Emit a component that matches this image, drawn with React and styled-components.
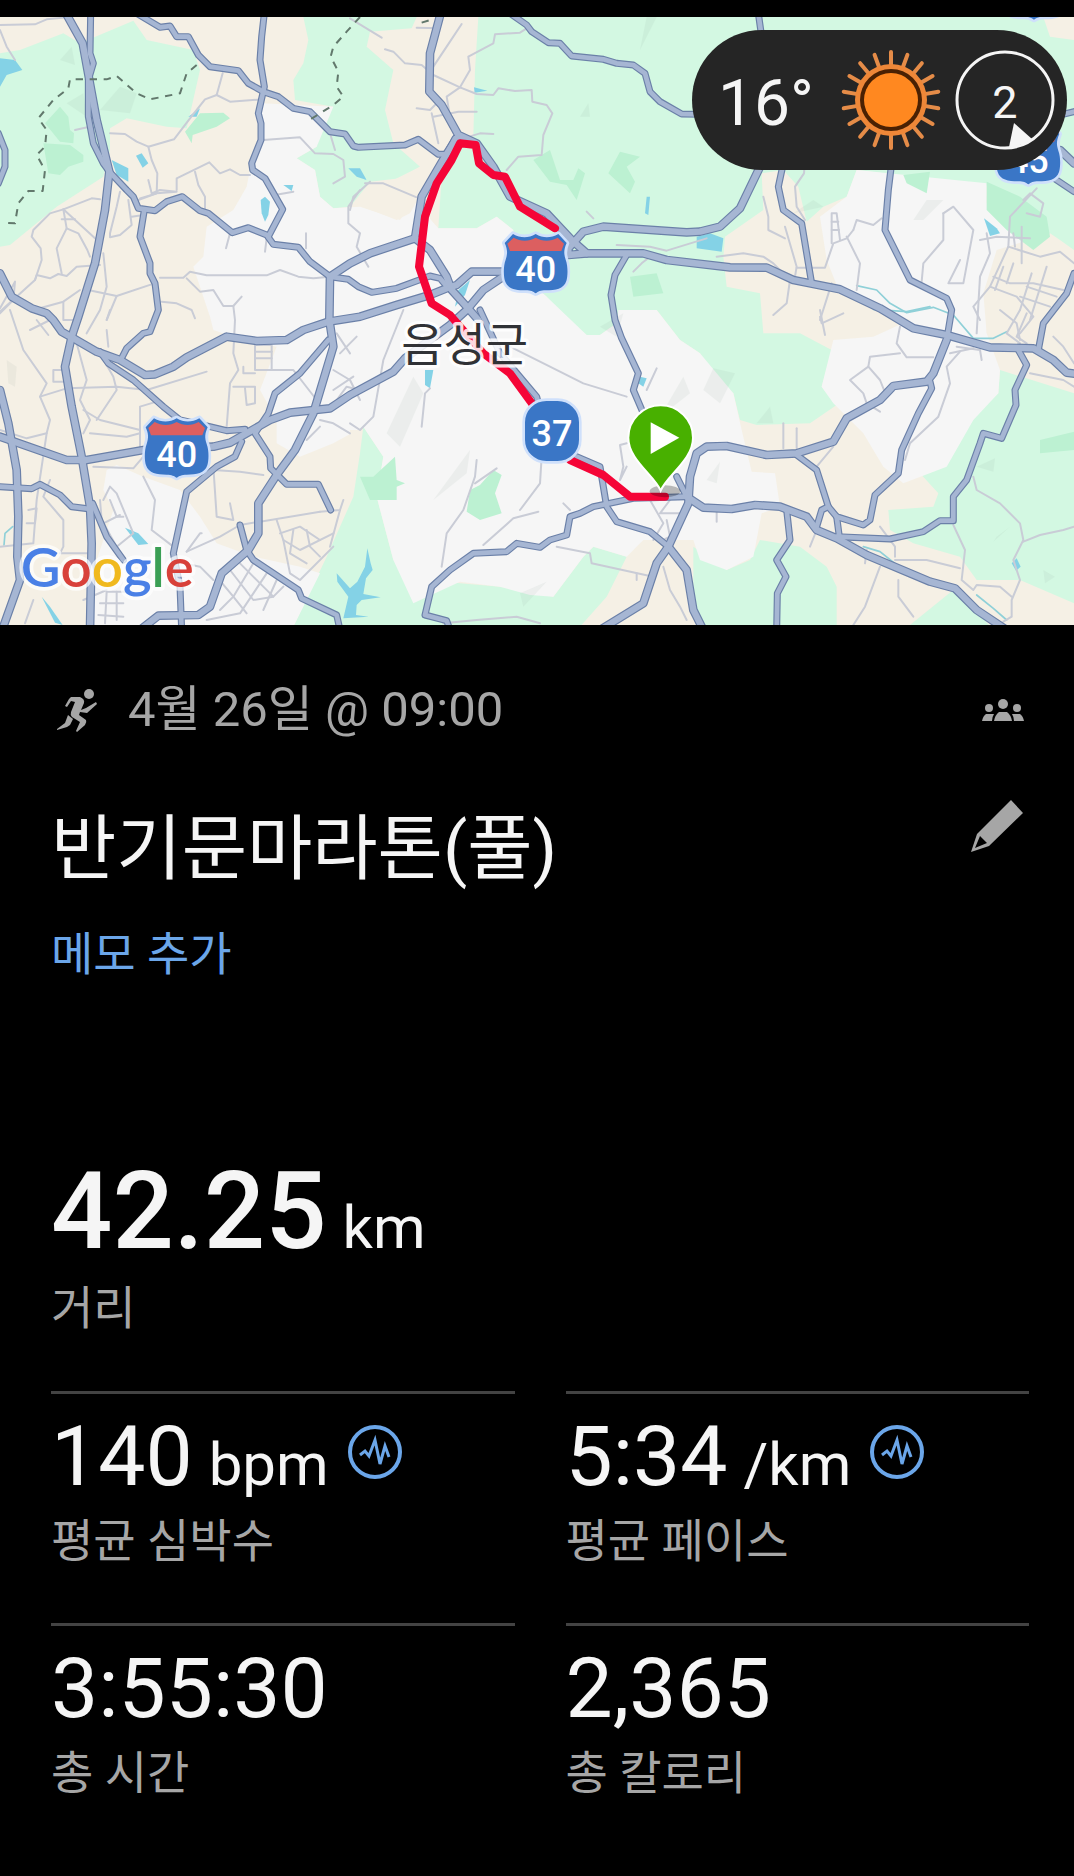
import React from "react";
import styled, { createGlobalStyle } from "styled-components";

const GlobalStyle = createGlobalStyle`
  * {
    box-sizing: border-box;
  }
  body {
    margin: 0;
    background-color: #000;
    font-family: Roboto, "Noto Sans CJK KR", sans-serif;
  }
`;

const StyledPage = styled.main`
  min-height: 100vh;
  padding-top: 17px;
  background-color: #000;
  color: #f5f5f5;
`;

const StyledMapWrapper = styled.section`
  position: relative;
`;

const StyledMap = styled.svg`
  display: block;
  width: 100%;
  height: auto;
`;

const StyledWeather = styled.div`
  position: absolute;
  top: 13px;
  right: 7px;
  width: 375px;
  height: 140px;
  padding: 0 12px 0 26px;
  border-radius: 70px;
  background-color: #252525;
  display: flex;
  align-items: center;
  justify-content: space-between;
`;

const StyledTemperature = styled.span`
  padding-top: 8px;
  font-size: 64px;
  line-height: 72px;
`;

const StyledWeatherIcons = styled.div`
  display: flex;
  gap: 14px;
`;

const StyledDetails = styled.section`
  padding: 49px 45px 0 51px;
`;

const StyledRow = styled.div`
  display: flex;
  align-items: center;
  justify-content: space-between;
`;

const StyledDate = styled.div`
  display: flex;
  align-items: center;
  gap: 29px;
  color: #a6a6a6;
  font-size: 49px;
  line-height: 72px;
`;

const StyledGroup = styled.span`
  display: flex;
  margin-right: 5px;
`;

const StyledHeading = styled(StyledRow)`
  margin-top: 51px;
  align-items: flex-start;
`;

const StyledTitle = styled.h1`
  margin: 0;
  font-size: 71px;
  font-weight: 400;
  line-height: 104px;
`;

const IconButton = styled.button`
  display: flex;
  padding: 0;
  border: 0;
  background: none;
  color: ${(props) => props.$color || "#a6a6a6"};
  &:hover {
    cursor: pointer;
  }
`;

const EditButton = styled(IconButton)`
  margin: 3px 6px 0 0;
`;

const MemoButton = styled.button`
  display: block;
  margin: 19px 0 0;
  padding: 0;
  border: 0;
  background: none;
  color: #6ba6e9;
  font-family: inherit;
  font-size: 46px;
  line-height: 68px;
  &:hover {
    cursor: pointer;
  }
`;

const StyledDistance = styled.div`
  height: 243px;
  margin-top: 160px;
`;

const StyledStats = styled.div`
  display: grid;
  grid-template-columns: 1fr 1fr;
  column-gap: 51px;
`;

const StyledStat = styled.div`
  height: 232px;
  padding-top: 13px;
  border-top: 3px solid #434343;
`;

const StyledValue = styled.div`
  display: flex;
  align-items: baseline;
  gap: 16px;
  font-size: ${(props) => (props.$large ? "108px" : "84px")};
  font-weight: ${(props) => (props.$large ? 500 : 400)};
  line-height: ${(props) => (props.$large ? "126px" : "100px")};
`;

const StyledUnit = styled.span`
  font-size: 60px;
  font-weight: 400;
  line-height: 60px;
`;

const InsightButton = styled(IconButton)`
  align-self: flex-start;
  margin: 18px 0 0 3px;
`;

const StyledLabel = styled.div`
  color: #a6a6a6;
  font-size: 46px;
  line-height: 68px;
`;

// map geometry, three units to the pixel
const greens = [
  "0,160 60,150 190,100 240,130 400,62 440,120 580,150 600,210 575,320 560,385 500,380 380,355 330,385 330,450 310,530 170,620 30,735 0,740",
  "910,51 1250,51 1235,85 1110,95 1100,140 1180,210 1155,330 1180,430 1260,500 1200,535 1110,545 1050,620 1000,625 960,590 945,510 890,475 950,440 960,370 1000,320 885,300 880,240 910,190 925,120",
  "1435,51 3222,51 3222,750 3180,720 3150,700 3050,740 2990,560 2570,510 2540,590 2470,620 2420,665 2395,560 2350,510 2285,520 2290,630 2175,710 2170,770 2180,860 2280,880 2290,1000 2400,1000 2495,1050 2465,1160 2510,1215 2430,1270 2270,1275 2220,1260 2200,1180 2130,1130 2100,1060 2040,1020 1970,930 1855,930 1850,970 1800,1005 1760,1005 1690,950 1640,890 1540,800 1540,690 1490,650 1430,685 1315,685 1325,530 1380,450 1420,410 1425,210",
  "3000,1110 3222,1180 3222,1810 3060,1740 2930,1740 2880,1670 2740,1630 2670,1590 2665,1530 2800,1520 2815,1480 2760,1420 2830,1400 2930,1240 2995,1180",
  "2080,1640 2180,1710 2250,1680 2280,1620 2400,1640 2480,1700 2510,1760 2510,1880 2110,1880 2080,1800",
  "2730,1875 2860,1770 2890,1780 2970,1880",
  "1090,1280 1150,1370 1130,1490 1180,1680 1240,1730 1380,1750 1500,1760 1660,1790 1750,1670 1780,1640 1880,1670 1820,1790 1740,1880 880,1880 980,1670 1060,1490 1080,1360",
];

const whites = [
  "785,310 1000,320 950,440 890,475 945,510 960,590 1000,625 1080,620 1200,660 1240,600 1315,685 1430,685 1490,650 1540,690 1540,800 1640,890 1760,1005 1800,1005 1850,970 1855,930 1970,930 2040,1020 2100,1060 2200,1180 2225,1290 2255,1415 2325,1420 2340,1520 2285,1540 2260,1670 2180,1710 2100,1680 2080,1620 1930,1620 1880,1670 1780,1640 1750,1670 1660,1790 1590,1785 1500,1760 1380,1745 1240,1810 1180,1680 1130,1490 1150,1370 1090,1280 1000,1330 900,1370 830,1330 830,1260 780,1170 830,1040 700,1010 640,990 630,950 580,800 610,770 620,680 700,630 740,560 750,510 785,400",
  "2570,510 2960,550 2960,610 3030,660 3090,700 3060,760 2990,770 2960,880 2960,1000 3000,1110 2995,1180 2920,1260 2840,1400 2710,1450 2650,1400 2590,1300 2500,1210 2465,1160 2500,1020 2620,1010 2730,960 2520,880 2480,780 2460,650 2540,590",
  "320,1410 350,1395 430,1430 540,1470 600,1550 650,1630 760,1670 900,1700 960,1720 880,1880 270,1880 280,1710 340,1530 310,1470",
];

const creams = [
  "2990,750 3120,710 3222,760 3222,980 3080,1010 2960,1000 2950,880",
  "3130,51 3222,51 3222,120 3150,110",
  "1050,1290 1080,1290 1060,1420 1050,1470",
  "1170,545 1260,500 1275,560 1230,640 1190,660 1100,625 1060,610",
];

const woods = [
  "180,320 205,350 210,390 222,400 220,430 180,425 135,370",
  "130,430 210,435 250,465 250,485 205,500 180,525 145,520",
  "600,340 670,338 690,355 650,380 578,405 575,430 555,395",
  "1600,480 1650,450 1680,540 1720,540 1735,505 1755,520 1730,600 1700,555 1650,545",
  "1825,520 1860,455 1920,470 1880,500 1905,545 1890,580",
  "1890,830 1970,820 1990,880 1900,890",
  "1410,1470 1440,1455 1480,1410 1505,1425 1485,1480 1505,1540 1440,1560 1400,1535",
  "1080,1430 1120,1430 1185,1370 1190,1440 1215,1450 1190,1460 1190,1500 1110,1500",
  "2710,525 2790,515 2780,580 2720,550",
  "2960,545 3060,590 3140,650 3150,710 3100,750 3020,690 2960,630",
  "3120,1320 3222,1295 3222,1350 3120,1360",
];

const shades = [
  "180,180 215,140 225,195",
  "300,330 360,260 410,280 390,340",
  "200,310 250,280 260,350",
  "1740,350 1765,310 1770,350",
  "1920,150 1940,51 1970,51",
  "2380,640 2440,600 2470,620",
  "2740,660 2780,600 2830,600 2770,660",
  "1160,1300 1240,1130 1270,1180 1200,1340",
  "1300,1500 1410,1350 1400,1420",
  "1560,1780 1640,1745 1570,1820",
  "2270,1270 2310,1220 2320,1270",
  "2110,1170 2140,1105 2205,1120 2160,1210",
  "2120,1440 2160,1385 2150,1450",
  "2930,1400 2985,1375 2980,1415",
  "2980,1625 3030,1580 2990,1610",
  "3130,1710 3165,1730 3135,1750",
  "20,1080 50,1100 45,1160 25,1150",
  "1800,980 1870,940 1850,1010",
  "1980,1250 2050,1130 2070,1180",
];

const waters = [
  "0,175 45,180 67,210 20,225 0,260",
  "335,480 385,505 385,545 350,525",
  "408,467 425,460 445,490 428,503",
  "782,600 795,590 810,605 805,645 795,665 785,640",
  "850,555 880,555 875,573",
  "1045,505 1080,505 1100,540 1070,530",
  "2090,710 2130,700 2170,715 2165,755 2090,745",
  "1375,870 1410,840 1395,885 1365,920",
  "1275,1110 1300,1110 1290,1165 1275,1155",
  "1920,1130 1940,1135 1930,1160 1915,1150",
  "375,1583 415,1600 445,1632 415,1635",
  "125,1790 150,1820 188,1875 165,1868",
  "1010,1720 1050,1765 1072,1745 1095,1700 1102,1645 1112,1690 1118,1710 1098,1735 1090,1782 1142,1792 1085,1800 1070,1815 1068,1845 1106,1850 1030,1855 1045,1790 1012,1745",
  "2952,655 2990,685 3000,700 2970,708",
  "3035,1690 3050,1675 3062,1700 3048,1712",
  "1940,590 1950,590 1945,645 1935,640",
  "1422,262 1462,272 1424,278",
  "565,350 600,325 590,350",
];

const streams = [
  "2570,857 2630,870 2670,910 2720,938 2800,922 2860,945 2920,1015 2980,1015 3020,995",
  "2590,1640 2640,1655 2690,1695",
  "2930,1785 2980,1825 3020,1860",
  "38,1580 15,1600 12,1635",
  "2620,928 2720,935 2790,920",
];

const minorRoads = [
  "0,75 105,73 140,58 200,52",
  "0,90 20,140 45,180",
  "330,400 375,402 410,425 445,440 522,418 570,355 615,298 650,285 668,220",
  "650,285 690,305 790,298",
  "445,440 455,480 472,520 470,580 420,595",
  "530,570 530,535 628,487 660,520 690,508 720,525 750,525",
  "585,515 595,555 615,590 615,625",
  "415,600 470,580 530,575 480,570 455,580 445,540",
  "225,390 262,382",
  "0,935 105,840 110,825 150,835 175,822 200,828 230,800 300,795",
  "105,840 125,780 122,745 95,710 100,690 150,640 190,628 275,595 300,598",
  "190,628 200,685 170,745 185,820",
  "200,685 235,700 262,750 270,770",
  "190,628 285,715",
  "185,658 225,658",
  "360,575 350,620 330,700 330,712 360,705 395,675 385,600",
  "395,650 430,645",
  "310,760 320,860 300,930 260,1000",
  "275,872 350,888 470,848",
  "350,888 320,960",
  "480,833 550,833 570,815 620,826 800,826 840,810 895,830 940,835 990,830",
  "560,835 600,875 640,870 670,918 700,918 725,890",
  "700,918 705,960 700,1060 715,1110 690,1150 680,1280",
  "485,905 530,910 575,930 585,955",
  "790,420 900,412 945,460 1000,462 1030,480 1035,530 1000,550",
  "690,700 678,745",
  "800,715 795,755",
  "918,700 918,745",
  "825,585 880,575",
  "1080,570 1045,620 1045,670 1080,700 1070,740 1105,800",
  "990,400 1005,450",
  "0,925 45,845 40,900 0,940",
  "100,930 190,905 240,870",
  "190,905 190,960 235,960",
  "1155,148 1180,155 1215,190 1265,195 1300,225 1380,262 1430,282 1480,285 1495,265 1545,273 1595,270 1597,305 1640,315 1657,340 1630,405 1625,465 1555,470 1520,510",
  "1380,262 1410,210 1405,170 1480,130 1485,103 1560,98 1580,85",
  "1050,55 1145,113",
  "1385,72 1340,140 1300,200",
  "1250,83 1320,85",
  "1380,262 1340,290 1350,350 1350,380",
  "1250,325 1290,330 1320,300",
  "1295,340 1315,430",
  "1300,350 1375,335 1430,335",
  "1390,415 1440,400 1480,402",
  "1095,550 1150,550 1250,592",
  "1110,545 1060,590 1050,630",
  "1900,815 1925,790 1950,770",
  "1760,635 1780,655",
  "2417,450 2412,520 2385,560 2390,620 2415,660",
  "1850,735 1950,740 2000,752 2120,715",
  "2290,590 2305,650 2305,690 2355,715",
  "2355,680 2390,800 2385,830",
  "2150,770 2230,760 2290,770 2320,790 2370,840 2360,910 2320,945",
  "2390,803 2475,803 2500,730 2540,715 2560,690",
  "2495,730 2495,640 2510,640 2520,720",
  "2495,665 2515,665",
  "2495,690 2517,690",
  "2560,690 2570,660 2620,675 2645,655",
  "2540,710 2580,790 2570,870",
  "2830,640 2860,620 2920,690 2890,850 2845,850 2880,780",
  "2830,640 2830,720 2770,790 2765,845",
  "2495,850 2460,960",
  "3110,565 3030,650 3025,740 2970,860 2920,920 2940,960",
  "3070,600 3090,580 3130,610 3120,650 3080,640",
  "3025,740 3120,770 3180,755 3222,790",
  "2940,720 2990,710 3090,715",
  "3040,700 3045,740",
  "3065,680 3065,790",
  "2970,860 3050,890 3100,950 3060,1000",
  "3040,790 3020,850",
  "3010,800 2985,870",
  "3080,860 3170,890",
  "3095,820 3060,930",
  "3140,800 3090,960",
  "3060,890 3150,920",
  "2980,830 3030,850 3100,850 3190,870",
  "2960,700 2970,760 2940,830 2930,1000",
  "30,930 70,1050 140,1150 120,1190 150,1260 140,1300 80,1315 0,1290",
  "120,1190 200,1165 350,1160 440,1170 620,1115",
  "160,1110 200,1110 200,1145 160,1145 160,1110",
  "250,1230 300,1260 420,1290",
  "230,1030 260,1140 240,1200 270,1260 250,1300",
  "140,1300 110,1500 100,1630 0,1640",
  "320,960 330,930",
  "320,990 325,1040",
  "90,990 150,960",
  "110,960 145,1005",
  "300,1060 340,1130 350,1170 290,1260",
  "420,1360 420,1220 470,1205",
  "270,1300 380,1310 420,1300",
  "280,1400 400,1405 430,1370",
  "430,1430 465,1500 455,1590 520,1640",
  "310,1500 330,1460 350,1480 400,1600 350,1640 305,1560 300,1500",
  "330,1500 350,1550 370,1550",
  "310,1570 360,1545",
  "150,1440 130,1490 190,1560 190,1640 180,1660 260,1660",
  "85,1530 110,1525 105,1570 80,1570",
  "560,1655 660,1610 720,1575 960,1535",
  "560,1655 600,1600 605,1600",
  "640,1400 650,1550 700,1560 690,1510",
  "640,1410 720,1415 790,1425",
  "765,1035 815,1035 815,1110 765,1110 765,1035",
  "765,1055 815,1055",
  "765,1075 815,1075",
  "700,1160 765,1160 765,1210 740,1215 735,1165",
  "815,1110 880,1110 950,1200",
  "730,1100 730,1120 765,1120",
  "1010,1000 1050,1060",
  "1070,1010 1020,1060",
  "1000,1110 1050,1140 1080,1200",
  "1000,1170 1060,1130",
  "1010,1200 1040,1160 1080,1170",
  "960,1260 1000,1270 1050,1300",
  "920,1320 960,1280",
  "830,1560 850,1620 900,1650 1000,1600",
  "840,1600 900,1580 960,1620",
  "850,1620 870,1720 900,1740 1000,1640",
  "880,1590 870,1660 920,1690",
  "920,1590 930,1640 960,1670",
  "960,1535 1020,1530 1030,1500",
  "1020,1530 990,1640",
  "650,1730 700,1790 740,1840",
  "690,1710 760,1800 820,1790",
  "720,1690 820,1790 850,1760",
  "760,1690 700,1790 660,1830",
  "800,1720 720,1840 620,1860",
  "830,1740 790,1830",
  "550,1690 600,1700 640,1740",
  "320,1775 385,1775",
  "320,1775 315,1870",
  "350,1775 350,1860",
  "300,1810 370,1810",
  "295,1845 370,1850",
  "100,1800 75,1870",
  "250,1800 320,1770",
  "1210,930 1150,1080 1120,1250 1080,1290 1050,1270",
  "1290,1165 1275,1180 1265,1280",
  "1530,1040 1650,1100 1750,1150 1880,1190",
  "1970,1105 1940,1170",
  "1430,1380 1425,1430 1390,1530 1340,1600 1325,1700",
  "1425,1450 1490,1405",
  "1625,1370 1620,1450 1560,1530",
  "1615,1535 1540,1555 1450,1635",
  "1670,1640 1770,1660 1775,1690 1960,1730",
  "1690,1510 1710,1530",
  "1880,1330 1860,1335 1870,1400 1860,1440 1880,1400",
  "1950,1500 1990,1570 1960,1620",
  "2010,1500 1980,1540 2040,1540",
  "2000,1560 2010,1610 1990,1620",
  "1990,1700 2010,1770 2040,1820 2060,1860",
  "1330,1870 1430,1860 1550,1850 1620,1870",
  "1910,1720 1910,1740",
  "2350,1270 2350,1345",
  "2390,1285 2390,1345",
  "2500,1340 2450,1400",
  "2150,1530 2150,1565",
  "2460,950 2465,970 2530,940",
  "2460,930 2475,1005",
  "2700,980 2690,1030 2720,1072 2800,1072",
  "2700,1060 2610,1070 2605,1100 2640,1140 2660,1190",
  "2605,1100 2550,1140 2590,1180 2600,1210 2640,1235",
  "2880,1055 2840,1100 2850,1150 2815,1250 2730,1330 2715,1380",
  "2870,1040 2940,1050 2945,1080",
  "2850,1060 2920,1045",
  "3060,930 3020,1000 3060,1030",
  "3000,930 3050,970 3060,1020",
  "3080,940 3050,1010 3080,1030",
  "3090,1120 3190,1140 3222,1160",
  "3160,1010 3190,1040 3222,1090",
  "2920,1430 2930,1470 3000,1510 3060,1570 3070,1620 3040,1680 3060,1740 3035,1800 3035,1850 3010,1865",
  "3070,1625 3120,1605 3190,1590 3222,1580",
  "2860,1575 2895,1650 2885,1740 2920,1770 2930,1755 3000,1760 3035,1790",
  "2685,1680 2780,1680 2880,1705",
  "2600,1650 2595,1690",
  "2640,1700 2595,1820 2560,1875",
  "2695,1740 2695,1790 2740,1850",
  "2430,1640 2450,1590",
  "2640,1580 2685,1640 2685,1670",
];

const mainRoads = [
  "272,40 270,160 280,190 265,240 265,350 280,430 310,490 328,515",
  "410,40 480,82 510,78 530,110 565,110 595,165 630,200 715,212 745,250 790,275 835,290 880,325 930,335 990,395 1035,402 1060,438 1075,442 1215,435 1255,418 1315,463 1340,462 1365,415",
  "793,40 785,110 780,180 793,260 775,340 783,370 783,420 755,490 758,510 795,535 848,628 805,710",
  "328,515 380,570 400,590 415,625 465,632 500,605 547,590 600,632 625,640 697,698 745,683 800,705 820,733 895,742 930,785 990,830 1045,838 1075,860 1115,877 1190,865 1290,828 1320,835 1345,865",
  "433,630 420,710 450,790 450,820 465,850 475,930 450,995 430,1000 380,1045 362,1080",
  "300,1055 325,1090 400,1140 490,1220 540,1260 630,1280 680,1292 735,1288",
  "0,1460 95,1466 120,1453 180,1485 215,1520 270,1527",
  "278,1510 320,1610 370,1680",
  "725,1325 705,1370 650,1400 560,1475 520,1660 540,1760 545,1890",
  "985,1020 900,1120 825,1180 805,1240 765,1300 810,1370 812,1405 860,1453 955,1453 992,1530",
  "720,1575 740,1650 760,1680 895,1770 905,1795 1010,1845 1020,1890",
  "-5,400 15,450 15,500 -5,550",
  "1530,40 1580,75 1595,95 1645,128 1680,130 1715,168 1810,178 1850,190 1900,195 1935,220 1950,275 1980,305 2045,342 2100,343",
  "1880,765 1845,825 1833,885 1845,960 1865,1015 1915,1120 1900,1170 1930,1240",
  "2275,40 2285,110",
  "2350,490 2335,560 2350,630 2405,670 2435,850",
  "2675,490 2665,570 2655,690 2700,780 2730,840 2840,895 2855,930 2840,1020",
  "2790,1145 2795,1165 2755,1240 2705,1350 2695,1420 2625,1485 2610,1560 2590,1575 2510,1550 2485,1520 2450,1410 2390,1365",
  "3055,1050 3080,1095 3045,1170 3048,1215 3005,1315 2950,1300 2940,1330 2900,1440 2860,1490 2860,1562 2820,1562 2770,1595 2670,1617 2510,1610",
  "2360,1530 2370,1620 2330,1680 2358,1730 2332,1780 2330,1890",
  "2450,1580 2465,1530 2485,1520",
  "2510,1550 2518,1610",
  "3222,820 3200,880 3130,970 3115,1050",
  "3140,520 3222,575",
  "3160,350 3222,335",
  "1350,1890 1340,1862 1275,1845 1295,1760 1350,1710 1420,1660 1520,1655 1550,1630 1620,1642 1650,1620 1700,1605 1710,1550 1740,1540 1780,1520 1900,1495 2060,1490",
  "1440,930 1500,1060 1610,1190 1620,1230",
  "1730,1370 1800,1400 1820,1520 1850,1565 1950,1595 2005,1640",
  "2030,1430 2060,1490",
];

const highways = [
  "195,35 248,130 268,240 290,360 328,515 315,630 285,790 235,950 215,1010 195,1100 215,1220 245,1370 270,1520 275,1630 270,1890",
  "0,820 35,890 95,925 140,940 160,960 185,995 220,1015 290,1055 360,1080 435,1125 465,1123 520,1100 560,1072 680,1010 770,1023 860,1020 910,990 985,965 1080,950 1190,915 1290,885 1340,865 1370,855 1415,815 1510,815",
  "0,1310 200,1380 260,1380 430,1350 640,1340 690,1328 810,1260 870,1238 990,1225 1050,1185 1180,1115 1215,1075 1350,975 1400,930 1450,870 1510,830",
  "0,1170 25,1270 50,1410 55,1550 52,1670 60,1740 10,1880",
  "420,1890 475,1847 595,1845 630,1820 665,1720 745,1650 775,1600 775,1510 830,1425 885,1350 940,1240 1000,1040 988,960 990,830 1050,790 1110,760 1245,715",
  "1322,40 1290,160 1288,275 1325,315 1375,405 1430,430 1480,500 1530,590 1640,640 1715,720 1760,760 1930,760 2000,780 2190,802 2300,803 2380,840 2520,868 2640,925 2740,985 2840,1005 2970,1042 3100,1045 3160,1080 3200,1118 3230,1122",
  "1370,415 1335,470 1265,590 1245,715 1290,750 1340,830 1355,870 1400,920 1435,960",
  "1760,760 1705,765 1705,745 1750,695 1810,680 2060,697 2100,695 2160,680 2220,625 2290,480",
  "2840,1020 2800,1120 2780,1145 2680,1158 2640,1200 2540,1255 2500,1325 2390,1360 2300,1365 2180,1338 2120,1340 2090,1360 2070,1430 2065,1510 2005,1640 1970,1690 1930,1810 1800,1890",
  "2005,1640 2060,1710 2080,1830 2110,1890",
  "2060,1490 2110,1523 2195,1527 2265,1515 2340,1520 2420,1550 2450,1590 2510,1615 2600,1665 2790,1745 2865,1765 2930,1830 3020,1890",
  "3180,450 3222,490",
];

const borders = [
  "590,195 560,220 540,280 450,298 410,280 350,228 320,238 210,238 205,265 160,300 115,355 140,390 135,440 110,465 135,510 128,573 85,573 55,610 45,670 15,668",
  "1080,51 1040,95 1000,140 992,170 1015,215 1010,260 1030,290 1000,315 925,362",
  "1265,68 1290,60",
];

const routePoints =
  "1665,685 1560,620 1515,530 1480,525 1437,490 1427,435 1380,430 1355,480 1310,550 1275,650 1257,800 1295,910 1350,945 1450,1060 1530,1120 1610,1230 1710,1380 1810,1425 1890,1490 1995,1490";

const Areas = ({ items, fill, opacity }) => (
  <g fill={fill} opacity={opacity}>
    {items.map((points) => (
      <polygon key={points} points={points} />
    ))}
  </g>
);

const Lines = ({ items, stroke, width, dash }) => (
  <g
    fill="none"
    stroke={stroke}
    strokeWidth={width}
    strokeDasharray={dash}
    strokeLinejoin="round"
    strokeLinecap={dash ? "butt" : "round"}
  >
    {items.map((points) => (
      <polyline key={points} points={points} />
    ))}
  </g>
);

const shieldPath =
  "M-68,-89 C-45,-76 -22,-76 0,-89 C22,-76 45,-76 68,-89 L93,-62 C84,-42 84,-30 90,-12 C98,10 96,40 92,52 C84,76 60,80 30,80 C14,80 8,84 0,89 C-8,84 -14,80 -30,80 C-60,80 -84,76 -92,52 C-96,40 -98,10 -90,-12 C-84,-30 -84,-42 -93,-62 Z";

const Shield = ({ x, y, number }) => (
  <g transform={`translate(${x} ${y})`}>
    <path
      d={shieldPath}
      fill="#3a76c6"
      stroke="#cfe0fb"
      strokeWidth="16"
      strokeLinejoin="round"
    />
    <path d={shieldPath} fill="#3a76c6" />
    <path
      d="M-66,-78 C-45,-66 -20,-66 0,-78 C20,-66 45,-66 66,-78 L85,-60 L77,-38 L-77,-38 L-85,-60 Z"
      fill="#dc5f60"
    />
    <text
      y="56"
      textAnchor="middle"
      fontSize="108"
      fontWeight="500"
      fill="#fff"
    >
      {number}
    </text>
  </g>
);

const RouteMap = () => (
  <StyledMap viewBox="0 51 3222 1824" role="img" aria-label="음성군">
    <rect y="51" width="3222" height="1824" fill="#f5f0e5" />
    <Areas items={greens} fill="#d3f8e2" />
    <Areas items={whites} fill="#f6f6f6" />
    <Areas items={creams} fill="#f5f0e5" />
    <Areas items={woods} fill="#bcf1d2" />
    <Areas items={shades} fill="#8fa99b" opacity="0.1" />
    <Areas items={waters} fill="#84d2e6" />
    <Lines items={streams} stroke="#8fd0d8" width="5" />
    <Lines items={minorRoads} stroke="#c9ccd6" width="6" />
    <Lines items={mainRoads} stroke="#6b80a8" width="21" />
    <Lines items={highways} stroke="#6b80a8" width="26" />
    <Lines items={mainRoads} stroke="#a6b6d3" width="14" />
    <Lines items={highways} stroke="#a6b6d3" width="19" />
    <Lines items={borders} stroke="#62786c" width="6" dash="22 20" />
    <Lines items={[routePoints]} stroke="#f50537" width="24" />

    <g
      fontFamily='"Noto Sans CJK KR", sans-serif'
      fontSize="138"
      textAnchor="middle"
    >
      <text
        x="1394"
        y="1084"
        fill="#303236"
        stroke="#fff"
        strokeWidth="20"
        strokeOpacity="0.85"
        strokeLinejoin="round"
        paintOrder="stroke"
      >
        음성군
      </text>
    </g>

    <Shield x={530} y={1344} number="40" />
    <Shield x={1607} y={791} number="40" />
    <Shield x={3085} y={464} number="45" />
    <Shield x={3102} y={-30} number="" />

    <rect
      x="1571"
      y="1199"
      width="170"
      height="188"
      rx="68"
      fill="#3a76c6"
      stroke="#cfe0fb"
      strokeWidth="8"
    />
    <text
      x="1656"
      y="1339"
      textAnchor="middle"
      fontSize="108"
      fontWeight="500"
      fill="#fff"
    >
      37
    </text>

    <ellipse cx="1995" cy="1474" rx="46" ry="18" fill="#000" opacity="0.25" />
    <path
      d="M1982,1472 C1962,1425 1885,1380 1885,1313 A97,97 0 0 1 2079,1313 C2079,1380 2002,1425 1982,1472 Z"
      fill="#48b000"
      stroke="#fff"
      strokeWidth="6"
    />
    <path d="M1952,1267 L2038,1313 L1952,1362 Z" fill="#fff" />

    <text
      x="62"
      y="1760"
      fontFamily="Lato, sans-serif"
      fontSize="164"
      fontWeight="600"
      stroke="#fff"
      strokeWidth="22"
      strokeOpacity="0.7"
      strokeLinejoin="round"
      paintOrder="stroke"
    >
      <tspan fill="#4a80e6">G</tspan>
      <tspan fill="#d8413a">o</tspan>
      <tspan fill="#f0b91e">o</tspan>
      <tspan fill="#4a80e6">g</tspan>
      <tspan fill="#3b9f55">l</tspan>
      <tspan fill="#d8413a">e</tspan>
    </text>
  </StyledMap>
);

const SunIcon = () => (
  <svg width="100" height="100" viewBox="-50 -50 100 100" aria-hidden="true">
    {Array.from({ length: 18 }, (_, i) => (
      <line
        key={i}
        y1="-34"
        y2="-48"
        stroke="#e58c48"
        strokeWidth="4"
        strokeLinecap="round"
        transform={`rotate(${i * 20})`}
      />
    ))}
    <circle r="36" fill="#ee8738" />
    <circle r="31" fill="#4a2103" />
    <circle r="27" fill="#ff8820" />
  </svg>
);

const WindIcon = ({ speed }) => (
  <svg width="100" height="100" viewBox="-50 -50 100 100">
    <circle r="48" fill="none" stroke="#f5f5f5" strokeWidth="3" />
    <path d="M9,23 L27,39 Q17,46 4,47 Z" fill="#f5f5f5" />
    <text y="18" textAnchor="middle" fontSize="45" fill="#f5f5f5">
      {speed}
    </text>
  </svg>
);

const RunIcon = () => (
  <svg width="48" height="48" viewBox="0 0 48 48" aria-hidden="true">
    <circle cx="38" cy="8" r="5" fill="currentColor" />
    <path
      d="M20,11 L29,11 Q34,13 33,17 L30,24 L35,22 L45,16 L46,18 L36,27 L29,26 L28,29 L35,34 Q36,36 34,39 L26,46 L25,45 L29,36 L21,31 Q19,29 20,26 L24,16 L20,15 L16,21 L14,20 L18,13 Z"
      fill="currentColor"
    />
    <path
      d="M17,29 L22,33 L19,39 L16,41 L6,44 L6,43 L14,37 Z"
      fill="currentColor"
    />
  </svg>
);

const GroupIcon = () => (
  <svg
    width="42"
    height="22"
    viewBox="0 0 42 22"
    fill="#a6a6a6"
    aria-hidden="true"
  >
    <circle cx="21" cy="5" r="5" />
    <path d="M12,22 Q13,16 17,13 H25 Q29,16 30,22 Z" />
    <circle cx="7" cy="9" r="4" />
    <path d="M0,22 Q1,17 4,15 H12 Q10,18 10,22 Z" />
    <circle cx="35" cy="9" r="4" />
    <path d="M42,22 Q41,17 38,15 H30 Q32,18 32,22 Z" />
  </svg>
);

const PencilIcon = () => (
  <svg width="52" height="52" viewBox="0 0 52 52" aria-hidden="true">
    <path
      d="M40,0 L52,13 L18,46 L0,52 L6,34 Z M9,36 L4,48 L16,43 Z"
      fill="currentColor"
      fillRule="evenodd"
    />
  </svg>
);

const InsightIcon = () => (
  <svg width="54" height="54" viewBox="-27 -27 54 54" aria-hidden="true">
    <circle r="25" fill="none" stroke="currentColor" strokeWidth="4" />
    <path
      d="M-15,3 L-10,-1 L-6,4 L0,-12 L5,12 L10,-6 L14,5"
      fill="none"
      stroke="currentColor"
      strokeWidth="3"
    />
  </svg>
);

function Stat(props) {
  const { value, unit, label, insight } = props;

  return (
    <StyledStat>
      <StyledValue>
        {value}
        {unit && <StyledUnit>{unit}</StyledUnit>}
        {insight && (
          <InsightButton type="button" $color="#6ba6e9" aria-label={label}>
            <InsightIcon />
          </InsightButton>
        )}
      </StyledValue>
      <StyledLabel>{label}</StyledLabel>
    </StyledStat>
  );
}

const stats = [
  { value: "140", unit: "bpm", label: "평균 심박수", insight: true },
  { value: "5:34", unit: "/km", label: "평균 페이스", insight: true },
  { value: "3:55:30", label: "총 시간" },
  { value: "2,365", label: "총 칼로리" },
];

function App() {
  return (
    <React.Fragment>
      <GlobalStyle />
      <StyledPage>
        <StyledMapWrapper>
          <RouteMap />
          <StyledWeather>
            <StyledTemperature>16°</StyledTemperature>
            <StyledWeatherIcons>
              <SunIcon />
              <WindIcon speed="2" />
            </StyledWeatherIcons>
          </StyledWeather>
        </StyledMapWrapper>
        <StyledDetails>
          <StyledRow>
            <StyledDate>
              <RunIcon />
              <span>4월 26일 @ 09:00</span>
            </StyledDate>
            <StyledGroup>
              <GroupIcon />
            </StyledGroup>
          </StyledRow>
          <StyledHeading>
            <StyledTitle>반기문마라톤(풀)</StyledTitle>
            <EditButton type="button" aria-label="편집">
              <PencilIcon />
            </EditButton>
          </StyledHeading>
          <MemoButton type="button">메모 추가</MemoButton>
          <StyledDistance>
            <StyledValue $large>
              42.25
              <StyledUnit>km</StyledUnit>
            </StyledValue>
            <StyledLabel>거리</StyledLabel>
          </StyledDistance>
          <StyledStats>
            {stats.map((stat) => (
              <Stat key={stat.label} {...stat} />
            ))}
          </StyledStats>
        </StyledDetails>
      </StyledPage>
    </React.Fragment>
  );
}

export default App;
